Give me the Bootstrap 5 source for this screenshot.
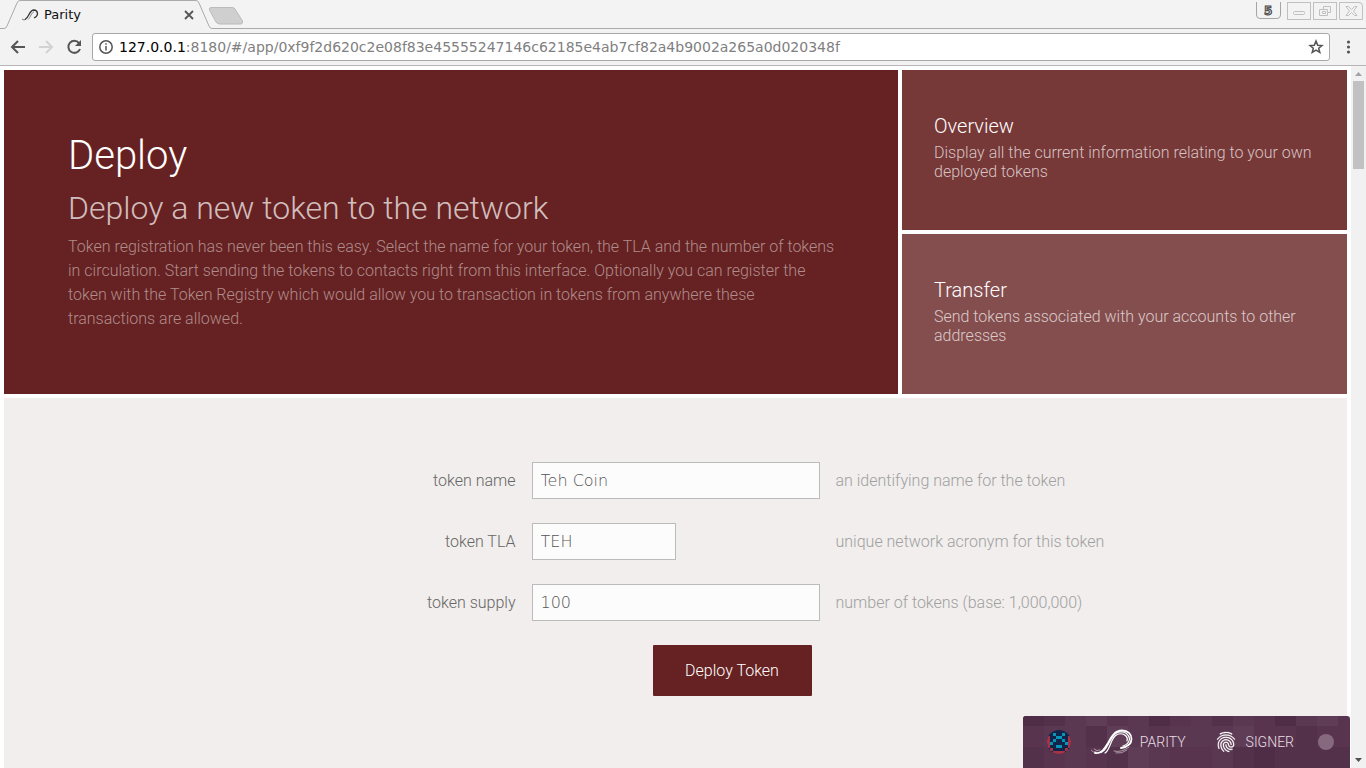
<!DOCTYPE html>
<html lang="en">
<head>
<meta charset="utf-8">
<meta name="viewport" content="width=device-width, initial-scale=1">
<title>Parity</title>
<link href="https://cdn.jsdelivr.net/npm/bootstrap@5.3.0/dist/css/bootstrap.min.css" rel="stylesheet">
<style>
  body { font-family: Roboto, "Liberation Sans", sans-serif; font-weight: 300; background: #fff; }
  /* browser window frame */
  .browser-ui { font-family: "DejaVu Sans", sans-serif; font-weight: 400; background: #f3f3f3; }
  .tab-strip { height: 29px; }
  .tab-fill { border-bottom: 1px solid #aaa; }
  .tab-shape, .window-buttons, .tool-icon { display: block; flex: none; }
  .tab-box { width: 212px; height: 29px; }
  .tab-content { padding: 0 18px 0 22px; font-size: 13px; color: #111; }
  .address-row { height: 37px; padding: 4px 15px 4px 10px; background: #f2f2f2; border-bottom: 1px solid #b6b4b6; }
  .address-box { height: 28px; padding: 0 5px; background: #fff; border: 1px solid #a9a7a9; border-radius: 3px; }
  .address-text { font-size: 14px; color: #808080; margin-left: 5px; }
  .address-text b { font-weight: 400; color: #000; }
  /* panels */
  .page-body { padding: 4px 4px 0; }
  .hero-panel { background: #662222; color: #fff; padding: 64px 60px 60px 64px; }
  .hero-title { font-size: 40px; line-height: 44px; font-weight: 300; margin: 0 0 10px; }
  .hero-lead { font-size: 32px; line-height: 40px; font-weight: 300; margin: 0 0 7px; color: #d1bdbd; }
  .hero-text { line-height: 24px; color: #b08c8c; }
  .side-panel { height: 160px; padding: 44px 32px 0; background: #773838; color: #d6c3c3; line-height: 19px; text-decoration: none; display: block; }
  .side-panel.transfer { background: #854e4e; color: #dacaca; }
  .side-title { font-size: 20px; line-height: 24px; font-weight: 300; margin: 0 0 5px; color: #fff; }
  .deploy-area { background: #f1eeed; margin-top: 4px; padding-top: 64px; }
  .deploy-form { display: grid; grid-template-columns: 1fr 288px 1fr; gap: 24px 16px; align-items: center; color: #666; line-height: 19px; }
  .deploy-form label { text-align: right; }
  .field-box { font-family: "DejaVu Sans", sans-serif; font-weight: 200; font-size: 16px; line-height: 19px; padding: 8px; height: 37px; border: 1px solid #bbb; border-radius: 0; background: #fcfcfc; color: #555; }
  .short-box { width: 50%; }
  .hint-text { color: #a0a0a0; }
  .deploy-btn { background: #662222; color: #fff; font-weight: 300; line-height: 19px; min-width: 159px; padding: 16px 31px; border: 0; border-radius: 1px; }
  /* scrollbar */
  .scroll-rail { width: 15px; background: #f1f1f1; }
  .scroll-thumb { width: 11px; height: 88px; background: #c1c1c1; }
  /* status bar */
  .status-bar { right: 16px; bottom: 0; height: 52px; padding: 0 16px 0 24px; background: #58344e; color: #e6dfe4; border-radius: 3px 3px 0 0; font-size: 14px; }
  .status-tiles { position: absolute; left: 0; top: 0; }
  .status-bar a { color: inherit; text-decoration: none; }
  .brand-link { margin: 0 28px 0 20px; gap: 7px; }
  .signer-link { margin-right: 24px; gap: 8px; }
  .status-dot { width: 16px; height: 16px; background: #86697e; }
</style>
</head>
<body class="vh-100 overflow-hidden d-flex flex-column">
<header class="browser-ui flex-shrink-0">
  <div class="tab-strip d-flex">
    <div class="tab-box position-relative">
      <svg class="tab-shape position-absolute" width="246" height="29" viewBox="0 0 246 29"><path d="M0 28.500H4Q6 28.500 7 26L17 3Q18 .5 20 .5H196Q198 .5 199 3L209 26Q210 28.500 212 28.500H246" fill="#f2f2f2" stroke="#aaa"/><path d="M211 7.500H232Q234 7.500 235 9L242.500 21Q243 24 241 24H220Q217 24 216 22L209.500 10Q209 7.500 211 7.500Z" fill="#cfcfcf" stroke="#bbb"/></svg>
      <div class="tab-content position-relative h-100 d-flex align-items-center gap-1">
        <svg class="tool-icon" width="18" height="16" viewBox="0 0 18 16" fill="none" stroke="#333"><path d="M0 12Q2 14 4 12" stroke="#777"/><path d="M3 12.500C7 11 7 3.500 11.500 3Q15.500 3 15.500 7Q15 10 12 11" stroke-width="1.300"/><path d="M6 12.500C9 10 9 5.500 12 5" stroke="#888"/></svg>
        <span class="flex-grow-1">Parity</span>
        <svg class="tool-icon" width="10" height="10" viewBox="0 0 10 10" stroke="#555" stroke-width="1.800"><path d="M1 1 9 9M9 1 1 9"/></svg>
      </div>
    </div>
    <div class="tab-fill flex-grow-1"></div>
    <div class="tab-fill"><svg class="window-buttons" width="110" height="28" viewBox="1256 0 110 28" fill="none" stroke="#c0c0c0"><path d="M1256.500 2V15Q1256.500 18.500 1260 18.500H1277Q1280.500 18.500 1280.500 15V2" stroke="#a5a5a5"/><text x="1264" y="15" font-size="12" font-weight="700" fill="#ccc" stroke="#444">5</text><rect x="1287.500" y="2.500" width="23" height="17"/><rect x="1313.500" y="2.500" width="23" height="17"/><path d="M1339.500 2.500H1359Q1362.500 2.500 1362.500 6V19.500H1339.500Z"/><rect x="1293.500" y="11.500" width="11" height="3" rx="1"/><path d="M1323.500 6.500H1330.500V12.500H1327.500V15.500H1319.500V9.500H1323.500ZM1323.500 9.500H1327.500V12.500M1322.500 11.500H1325.500V13.500H1322.500Z"/><path d="M1346 6.500H1348.500L1351.500 9.500L1354.500 6.500H1357L1353.500 11L1357 15.500H1354.500L1351.500 12.500L1348.500 15.500H1346L1349.500 11Z"/></svg></div>
  </div>
  <div class="address-row d-flex align-items-center">
    <svg class="tool-icon" width="82" height="18" viewBox="10 38 82 18" fill="none" stroke="#555" stroke-width="2"><path d="M25 47H12M18 41 12 47 18 53"/><path d="M39 47H52M46 41 52 47 46 53" stroke="#d2d2d2"/><path d="M79 43A6 6 0 1 0 80 49"/><path d="M81 40V46H75Z" fill="#555" stroke="none"/></svg>
    <div class="address-box d-flex align-items-center flex-grow-1">
      <svg class="tool-icon" width="16" height="16" viewBox="0 0 16 16" fill="none" stroke="#555" stroke-width="1.500"><circle cx="8" cy="8" r="6.200"/><path d="M8 7V11.500M8 4.200V5.800"/></svg>
      <span class="address-text flex-grow-1"><b>127.0.0.1</b>:8180/#/app/0xf9f2d620c2e08f83e45555247146c62185e4ab7cf82a4b9002a265a0d020348f</span>
      <svg class="tool-icon" width="16" height="16" viewBox="0 0 16 16" fill="none" stroke="#555" stroke-width="1.500"><path d="M8 2 9.700 6.200 14 6.500 10.700 9.300 11.800 13.500 8 11.200 4.200 13.500 5.300 9.300 2 6.500 6.300 6.200Z"/></svg>
    </div>
    <svg class="tool-icon ms-3" width="5" height="16" viewBox="0 0 5 16" fill="#555"><circle cx="2.500" cy="3" r="1.600"/><circle cx="2.500" cy="8" r="1.600"/><circle cx="2.500" cy="13" r="1.600"/></svg>
  </div>
</header>
<div class="d-flex flex-grow-1 overflow-hidden">
  <main class="page-body flex-grow-1 d-flex flex-column">
    <div class="row gx-1">
      <div class="col-8"><section class="hero-panel h-100">
        <h1 class="hero-title">Deploy</h1>
        <h2 class="hero-lead">Deploy a new token to the network</h2>
        <p class="hero-text mb-0">Token registration has never been this easy. Select the name for your token, the TLA and the number of tokens in circulation. Start sending the tokens to contacts right from this interface. Optionally you can register the token with the Token Registry which would allow you to transaction in tokens from anywhere these transactions are allowed.</p>
      </section></div>
      <nav class="col-4 d-flex flex-column gap-1">
        <a class="side-panel" href="#overview"><h3 class="side-title">Overview</h3>Display all the current information relating to your own deployed tokens</a>
        <a class="side-panel transfer" href="#transfer"><h3 class="side-title">Transfer</h3>Send tokens associated with your accounts to other addresses</a>
      </nav>
    </div>
    <section class="deploy-area flex-grow-1">
      <form class="deploy-form">
        <label for="token-name">token name</label>
        <input id="token-name" class="form-control field-box" type="text" value="Teh Coin">
        <span class="hint-text">an identifying name for the token</span>
        <label for="token-tla">token TLA</label>
        <input id="token-tla" class="form-control field-box short-box" type="text" value="TEH">
        <span class="hint-text">unique network acronym for this token</span>
        <label for="token-supply">token supply</label>
        <input id="token-supply" class="form-control field-box" type="text" value="100">
        <span class="hint-text">number of tokens (base: 1,000,000)</span>
        <span></span>
        <button type="button" class="btn deploy-btn ms-auto me-2">Deploy Token</button>
      </form>
    </section>
  </main>
  <div class="scroll-rail flex-shrink-0 d-flex flex-column align-items-center justify-content-between">
    <div class="d-flex flex-column align-items-center"><svg width="15" height="15" viewBox="0 0 15 15"><path d="M4 10 7.500 6 11 10Z" fill="#a3a3a3"/></svg><div class="scroll-thumb"></div></div>
    <svg width="15" height="14" viewBox="0 0 15 14"><path d="M4 4 11 4 7.500 8Z" fill="#505050"/></svg>
  </div>
</div>
<footer class="status-bar position-fixed overflow-hidden d-flex align-items-center">
  <!-- mosaic of 21px tiles -->
  <svg class="status-tiles" width="336" height="52" viewBox="0 0 336 52" shape-rendering="crispEdges">
    <g fill="#4f2d46"><path d="M0 0H21V10H0ZM126 0H147V10H126ZM252 0H273V10H252ZM231 31H252V52H231Z"/></g>
    <g fill="#53314a"><path d="M21 0H42V10H21ZM189 0H210V10H189ZM63 10H84V31H63ZM0 31H21V52H0ZM84 31H105V52H84ZM210 31H231V52H210ZM252 31H336V52H252ZM273 10H294V31H273Z"/></g>
    <g fill="#5b3852"><path d="M42 0H63V10H42ZM105 0H126V10H105ZM168 0H189V10H168ZM210 0H231V10H210ZM273 0H294V10H273ZM21 10H63V31H21ZM105 10H126V31H105ZM147 10H210V31H147ZM126 31H147V52H126ZM189 31H210V52H189ZM42 31H63V52H42Z"/></g>
    <g fill="#5f3d57"><path d="M63 0H84V10H63ZM294 0H315V10H294ZM84 10H105V31H84ZM210 10H231V31H210ZM105 31H126V52H105Z"/></g>
  </svg>
  <svg class="position-relative rounded-circle flex-shrink-0" width="24" height="24" viewBox="0 0 8 8" shape-rendering="crispEdges" role="img" aria-label="Account">
    <path d="M0 0H8V8H0Z" fill="#13244a"/>
    <path d="M2 1H3V2H2ZM5 1H6V2H5ZM3 2H5V3H3ZM2 3H3V4H2ZM5 3H6V4H5ZM1 4H2V5H1ZM6 4H7V5H6ZM3 5H5V6H3Z" fill="#0796b8"/>
    <path d="M0 2H1V6H0ZM7 2H8V6H7ZM1 6H2V7H1ZM6 6H7V7H6ZM2 7H6V8H2Z" fill="#a63446"/>
  </svg>
  <a class="brand-link position-relative d-flex align-items-center" href="#parity">
    <svg width="42" height="26" viewBox="0 0 42 26" fill="none" stroke="#fff" stroke-linecap="round">
      <path d="M4 24C11 25 14 19 17 14C21 7 24 1.500 31 1.500C37 1.500 40.500 5 40.500 10C40.500 15 36 18 30 19" stroke-width="1.800"/>
      <path d="M7 24C14 24 16 17 19 12C22 6 25 3 29 3C34 2.500 38 5 38.500 10C38 14 35 16 32 17" stroke-width="1.200"/>
      <path d="M14 24C19 21 19 12 24 7C27 4 32 4 35 7Q37 9 36 12" stroke-width="1.200"/>
      <path d="M0 21Q2 24 5 23M3 20Q6 23 9 21M23 22Q30 24 38 18M25 24Q31 25 36 21" stroke-width=".8" opacity=".65"/>
    </svg>
    <span>PARITY</span>
  </a>
  <a class="signer-link position-relative d-flex align-items-center" href="#signer">
    <svg width="24" height="24" viewBox="0 0 24 24" fill="#fff" stroke="#fff" stroke-width=".3"><path d="M17.810 4.470c-.08 0-.16-.02-.23-.06C15.660 3.420 14 3 12.010 3c-1.980 0-3.860.47-5.570 1.410-.24.13-.54.04-.68-.2-.13-.24-.04-.55.2-.68C7.820 2.520 9.860 2 12.010 2c2.130 0 3.990.47 6.030 1.520.25.13.34.43.21.67-.09.18-.26.28-.44.28zM3.500 9.720c-.1 0-.2-.03-.29-.09-.23-.16-.28-.47-.12-.7.99-1.400 2.250-2.500 3.750-3.270C9.980 4.040 14 4.030 17.150 5.650c1.500.77 2.760 1.860 3.750 3.250.16.22.11.54-.12.7-.23.16-.54.11-.7-.12-.9-1.260-2.040-2.250-3.390-2.940-2.870-1.470-6.540-1.470-9.400.01-1.360.7-2.500 1.700-3.400 2.960-.08.14-.23.21-.39.21zm6.250 12.070c-.13 0-.26-.05-.35-.15-.87-.87-1.340-1.430-2.010-2.640-.69-1.230-1.050-2.730-1.050-4.340 0-2.970 2.540-5.390 5.660-5.390s5.660 2.420 5.660 5.390c0 .28-.22.5-.5.5s-.5-.22-.5-.5c0-2.420-2.090-4.390-4.660-4.390-2.570 0-4.660 1.970-4.660 4.390 0 1.440.32 2.770.93 3.850.64 1.150 1.080 1.640 1.850 2.420.19.2.19.51 0 .71-.11.1-.24.15-.37.15zm7.170-1.850c-1.190 0-2.240-.3-3.100-.89-1.490-1.010-2.380-2.650-2.380-4.390 0-.28.22-.5.5-.5s.5.22.5.5c0 1.410.72 2.740 1.940 3.560.71.48 1.540.71 2.540.71.24 0 .64-.03 1.040-.1.27-.05.53.13.58.41.05.27-.13.53-.41.58-.57.11-1.070.12-1.210.12zM14.910 22c-.04 0-.09-.01-.13-.02-1.590-.44-2.630-1.030-3.720-2.100-1.400-1.390-2.170-3.240-2.170-5.220 0-1.620 1.380-2.940 3.080-2.940 1.700 0 3.080 1.320 3.080 2.940 0 1.070.93 1.940 2.080 1.940s2.080-.87 2.080-1.940c0-3.770-3.250-6.830-7.250-6.830-2.840 0-5.440 1.580-6.610 4.030-.39.81-.59 1.760-.59 2.800 0 .78.07 2.010.67 3.610.1.26-.03.55-.29.64-.26.1-.55-.04-.64-.29-.49-1.310-.73-2.610-.73-3.960 0-1.200.23-2.290.68-3.240 1.330-2.790 4.280-4.600 7.510-4.600 4.550 0 8.250 3.510 8.250 7.830 0 1.620-1.380 2.940-3.080 2.940s-3.080-1.320-3.080-2.940c0-1.070-.93-1.940-2.080-1.940s-2.080.87-2.080 1.940c0 1.710.66 3.310 1.870 4.510.95.94 1.860 1.460 3.270 1.850.27.07.42.35.35.61-.05.23-.26.38-.47.38z"/></svg>
    <span>SIGNER</span>
  </a>
  <span class="status-dot position-relative rounded-circle"></span>
</footer>
<script src="https://cdn.jsdelivr.net/npm/bootstrap@5.3.0/dist/js/bootstrap.bundle.min.js"></script>
</body>
</html>
